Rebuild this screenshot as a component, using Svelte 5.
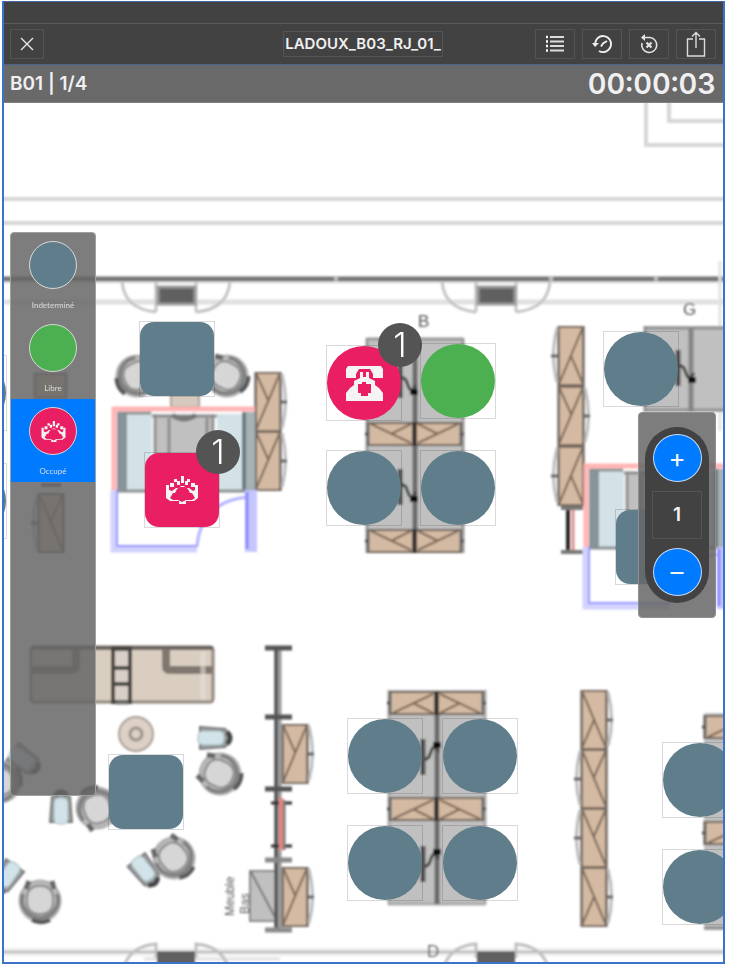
<script>
  const states = [
    { id: 'unknown', label: 'Indeterminé', color: '#607d8b' },
    { id: 'free', label: 'Libre', color: '#4caf50' },
    { id: 'busy', label: 'Occupé', color: '#e91e63', icon: 'meeting' }
  ];
  const colors = Object.fromEntries(states.map((s) => [s.id, s.color]));

  // Top-left corner of each seat on the plan, in plan pixels.
  const seats = [
    { x: -73, y: 252, shape: 'round', state: 'unknown' },
    { x: -73, y: 360, shape: 'round', state: 'unknown' },
    { x: 135, y: 218, shape: 'room', state: 'unknown' },
    { x: 140, y: 349, shape: 'room', state: 'busy', icon: 'meeting', badge: 1, bx: 51, by: -23 },
    { x: 322, y: 242, shape: 'round', state: 'busy', icon: 'phone', badge: 1, bx: 51, by: -23 },
    { x: 416, y: 240, shape: 'round', state: 'free' },
    { x: 322, y: 347, shape: 'round', state: 'unknown' },
    { x: 416, y: 347, shape: 'round', state: 'unknown' },
    { x: 599, y: 228, shape: 'round', state: 'unknown' },
    { x: 611, y: 406, shape: 'room', state: 'unknown' },
    { x: 104, y: 651, shape: 'room', state: 'unknown' },
    { x: 343, y: 615, shape: 'round', state: 'unknown' },
    { x: 438, y: 615, shape: 'round', state: 'unknown' },
    { x: 343, y: 722, shape: 'round', state: 'unknown' },
    { x: 438, y: 722, shape: 'round', state: 'unknown' },
    { x: 658, y: 639, shape: 'round', state: 'unknown' },
    { x: 658, y: 746, shape: 'round', state: 'unknown' }
  ];

  let selected = $state('busy');
  let count = $state(1);
</script>

{#snippet meeting(color)}
  <svg class="glyph" viewBox="0 0 32 28" aria-hidden="true">
    <path fill="#f4f4f4" d="M0 9h3v5l3 1 4-3h3l2-2h3l2 2h3l4 3 2-1V9h3v13l-4 3h-8v3h-7v-3H4l-4-3z" />
    <path fill="#f4f4f4" d="M15 0h3v7h-3zM8 3h3v3H8zM21 3h3v3h-3zM4 7h4v4H4zM25 7h4v4h-4zM11 5h3v4h-3zM19 5h3v4h-3z" />
    <path fill={color} d="M4 22l3-5h2l2-4 3-2h5l3 2 2 4h2l3 5-3 2h-6l-4 2-4-2H7z" />
  </svg>
{/snippet}

{#snippet phone(color)}
  <svg class="glyph big" viewBox="0 0 37 35" aria-hidden="true">
    <path fill="#f4f4f4" d="M2 0h33l2 3v9H27V8H10v4H0V3z" />
    <path fill={color} d="M13 3h11l3 5v1H10V8z" />
    <path fill="#f4f4f4" d="M14 6h3v5h3V6h3v6l6 3v4l4 3 4 5v8H0v-8l4-5 4-3v-4l6-3z" />
    <path fill={color} d="M12 18h4v-2h4v2h5v9h-3v3h-7v-3h-3z" />
  </svg>
{/snippet}

<!-- Pair of low cupboards, each 44 wide; flip turns the door marks over -->
{#snippet lowPair(x, y, flip)}
  <g transform="translate({x} {flip ? y + 24 : y}) scale(1 {flip ? -1 : 1})">
    <rect x="0" y="0" width="97" height="24" fill="#999" />
    <rect x="4" y="2" width="89" height="20" fill="#d4baa2" />
    <path d="M5 2l40 19M25 12l20-10M92 2L52 21M72 12L52 2" stroke="#7c6858" stroke-width="2" fill="none" />
    <path d="M2 1h93v22H2z" stroke="#6a5e55" stroke-width="2" fill="none" />
    <path d="M-1 12h4M94 12h4" stroke="#555" stroke-width="3" />
    <path d="M48.500 0v24" stroke="#383430" stroke-width="5" />
  </g>
{/snippet}

{#snippet lamp(x, y, flip)}
  <g transform="translate({x} {y}) scale(1 {flip ? -1 : 1})" fill="none">
    <path d="M0-18V18" stroke="#555" stroke-width="5" />
    <path d="M2-3l4 3 3 8 3 3 4-6" stroke="#444" stroke-width="3" />
    <path d="M10 12h8" stroke="#111" stroke-width="6" />
  </g>
{/snippet}

<!-- Tall cupboard segment; side puts the handle left or right -->
{#snippet tall(x, y, side, kind)}
  <g transform="translate({x} {y})" fill="none">
    <rect width="28" height="60" fill="#999" />
    <rect x="3" y="1" width="22" height="58" fill="#d4baa2" />
    {#if kind === 'y'}
      <path d="M2 1l12 27M26 1L2 58" stroke="#7c6858" stroke-width="2" />
    {:else if kind === 'ym'}
      <path d="M26 1L14 28M2 1l24 57" stroke="#7c6858" stroke-width="2" />
    {:else if kind === 'a'}
      <path d="M26 1L2 58M14 30l12 28" stroke="#7c6858" stroke-width="2" />
    {:else}
      <path d="M2 1l24 57M14 30L2 58" stroke="#7c6858" stroke-width="2" />
    {/if}
    <path d="M2 1h24v58H2z" stroke="#77695e" stroke-width="2" />
    {#if side === 'r'}
      <path d="M28 2q7 28 0 54" stroke="#bbb" stroke-width="3" /><path d="M27 30h6" stroke="#666" stroke-width="3" />
    {:else}
      <path d="M0 2q-7 28 0 54" stroke="#bbb" stroke-width="3" /><path d="M1 30h-7" stroke="#666" stroke-width="3" />
    {/if}
  </g>
{/snippet}

{#snippet armchair(x, y, angle)}
  <g transform="translate({x} {y}) rotate({angle})" fill="none">
    <circle r="20" fill="#bcbcbc" stroke="#b0b0b0" stroke-width="3" />
    <path d="M-17-7A18 18 0 1 0 17-7" stroke="#808080" stroke-width="4" />
    <path d="M-8 19A20 20 0 0 0 10 19" stroke="#555" stroke-width="4" />
    <rect x="-13" y="-15" width="26" height="28" rx="11" fill="#d6d6d6" stroke="#888" stroke-width="2" />
    <path d="M-14-12l3-8M14-12l-2-8" stroke="#666" stroke-width="5" />
  </g>
{/snippet}

{#snippet stool(x, y, angle)}
  <g transform="translate({x} {y}) rotate({angle})">
    <path d="M-11 14L-9-11q9-9 18 0l2 25z" fill="#9ba1a3" stroke="#777" stroke-width="2" />
    <path d="M-6-13q6-6 12 0" fill="none" stroke="#444" stroke-width="5" />
    <rect x="-7" y="-10" width="14" height="26" rx="5" fill="#d2e4ea" stroke="#a6b2b6" />
  </g>
{/snippet}

{#snippet door(x, y)}
  <g transform="translate({x} {y})" fill="none" stroke="#c4c4c4" stroke-width="3">
    <path d="M0 0v31M40 0v31M0 31Q-32 28-34 0M40 31Q72 28 74 0" />
    <rect x="2" y="6" width="37" height="17" fill="#606060" stroke="#999" />
  </g>
{/snippet}

{#snippet booth(x, y)}
  <g transform="translate({x} {y})" fill="none">
    <rect x="4" y="6" width="138" height="79" fill="#fff" />
    <rect x="5" y="6" width="10" height="78" fill="#87949a" />
    <rect x="15" y="6" width="25" height="78" fill="#d2e2e7" />
    <rect x="43" y="8" width="57" height="76" fill="#c0c0c0" />
    <path d="M40 10h66M43 8v76M57 12v72M95 12v72M101 8v76" stroke="#8d8d8d" stroke-width="3" />
    <rect x="105" y="8" width="25" height="76" fill="#d2e2e7" />
    <rect x="130" y="6" width="13" height="78" fill="#a5b2b6" />
    <path d="M132 6v78" stroke="#6d787c" stroke-width="4" />
    <path d="M3 85h140M5 7h34" stroke="#8a8f8f" stroke-width="3" />
    <path d="M60 9q12 8 24 0" stroke="#777" stroke-width="5" />
    <path d="M2 84V3h141" stroke="#ffb4b4" stroke-width="5" />
    <path d="M2 84v59h83" stroke="#d2d2ff" stroke-width="7" />
    <path d="M5 84v56h80v-2" stroke="#9696ff" stroke-width="2" />
    <path d="M85 140q4-44 50-49" stroke="#b4b4ff" stroke-width="3" />
    <path d="M139 84v62" stroke="#c6c6ff" stroke-width="12" />
    <path d="M135 86v57" stroke="#8787ff" stroke-width="3" />
  </g>
{/snippet}

<main class="app">
  <header>
    <div class="status"></div>
    <nav>
      <div class="side">
        <button class="tool close" aria-label="Fermer">
          <svg width="14" height="14" viewBox="0 0 14 14"><path d="M1 1l12 12M13 1L1 13" stroke="#e8e8e8" stroke-width="1.400" /></svg>
        </button>
      </div>
      <h1>LADOUX_B03_RJ_01_</h1>
      <div class="side end">
        <button class="tool" aria-label="Liste">
          <svg width="20" height="18" viewBox="0 0 20 18"><path d="M5 2h14M5 6.500h14M5 11h14M5 15.500h14" stroke="#dcdcdc" stroke-width="1.800" /><path d="M1 2h2M1 6.500h2M1 11h2M1 15.500h2" stroke="#fff" stroke-width="2.400" /></svg>
        </button>
        <button class="tool" aria-label="Historique">
          <svg width="20" height="20" viewBox="0 0 20 20" fill="none" stroke="#eee" stroke-width="1.900"><path d="M3 10.500A8 8 0 1 1 7 17" /><path d="M0 9l3 4 4-4z" fill="#eee" stroke="none" /><path d="M9 12.500l2-3 4-2.500" /></svg>
        </button>
        <button class="tool" aria-label="Réinitialiser">
          <svg width="20" height="20" viewBox="0 0 20 20" fill="none" stroke="#e4e4e4" stroke-width="1.600"><path d="M5 3.500h6A7.500 7.500 0 1 1 3 9" /><path d="M2 3.500L6 0v7z" fill="#e4e4e4" stroke="none" /><path d="M7.500 8.500l5 5M12.500 8.500l-5 5" stroke-width="2.200" /></svg>
        </button>
        <button class="tool" aria-label="Partager">
          <svg width="20" height="26" viewBox="0 0 20 26" fill="none" stroke="#ddd" stroke-width="1.400"><path d="M7 8H1.500v17h17V8H13M10 17V1.500M6 5.500l4-4 4 4" /></svg>
        </button>
      </div>
    </nav>
    <div class="info"><span class="place">B01 | 1/4</span><time>00:00:03</time></div>
  </header>

  <section class="plan" aria-label="Plan">
    <svg class="drawing" width="720" height="859" viewBox="4 103 720 859" role="img" aria-label="Plan de l’étage">
      <defs><filter id="soft"><feGaussianBlur stdDeviation="1" /></filter></defs>
      <g filter="url(#soft)" fill="none">
        <path d="M646 98v47h84M669 98v23h61M0 199h730M0 223h730" stroke="#d6d6d6" stroke-width="4" />
        <path d="M0 302h730" stroke="#e0e0e0" stroke-width="5" />
        <path d="M0 282h730" stroke="#eee" stroke-width="4" />
        <path d="M0 279h730" stroke="#757575" stroke-width="5" />
        <path d="M336 276v6M551 276v6M656 276v6" stroke="#bbb" stroke-width="4" />
        <path d="M720 261v170" stroke="#e2e2e2" stroke-width="3" />
        {@render door(156, 281)}
        {@render door(476, 281)}
        <path d="M0 952h730" stroke="#eee" stroke-width="8" />
        <path d="M0 952h730" stroke="#b0b0b0" stroke-width="2" />
        <path d="M144 959h136" stroke="#e2e2e2" stroke-width="3" />
        {#each [156, 476] as dx}
          <path d="M{dx} 958v-14q-24 2-31 20M{dx + 40} 958v-14q24 2 31 20" stroke="#bfbfbf" stroke-width="3" />
          <rect x={dx + 1} y="951" width="38" height="14" fill="#606060" />
        {/each}

        <!-- Upper desk island -->
        <rect x="366" y="338" width="98" height="215" fill="#c0c0c0" />
        <path d="M367 339h96M367 338v215M463 338v215" stroke="#999" stroke-width="3" />
        <path d="M415 340v212" stroke="#6a6a6a" stroke-width="5" />
        {@render lowPair(366, 422, false)}
        {@render lowPair(366, 529, false)}
        {@render lamp(400, 380, false)}
        {@render lamp(400, 487, false)}

        <!-- Lower desk island -->
        <rect x="388" y="690" width="98" height="215" fill="#c0c0c0" />
        <path d="M388 904h97M389 690v215M485 690v215" stroke="#aaa" stroke-width="3" />
        <path d="M437 692v212" stroke="#6a6a6a" stroke-width="5" />
        {@render lowPair(388, 691, true)}
        {@render lowPair(388, 797, true)}
        {@render lamp(423, 757, true)}
        {@render lamp(423, 864, true)}

        <!-- Islands cut by the right edge -->
        <rect x="644" y="326" width="90" height="86" fill="#c0c0c0" />
        <path d="M644 328h90M645 326v86M644 410h90" stroke="#929292" stroke-width="3" />
        <path d="M691 328v84" stroke="#858585" stroke-width="5" />
        {@render lamp(678, 368, false)}
        <rect x="704" y="713" width="90" height="217" fill="#c0c0c0" />
        <path d="M704 928h90" stroke="#999" stroke-width="4" />
        {@render lowPair(703, 715, true)}
        {@render lowPair(703, 821, true)}

        <!-- Tall cupboards -->
        {@render tall(254, 372, 'r', 'y')}
        {@render tall(254, 431, 'r', 'y')}
        {@render tall(557, 326, 'l', 'a')}
        {@render tall(557, 386, 'r', 'y')}
        {@render tall(557, 446, 'l', 'a')}
        {@render tall(580, 690, 'r', 'am')}
        {@render tall(580, 749, 'l', 'ym')}
        {@render tall(580, 808, 'l', 'ym')}
        {@render tall(580, 867, 'r', 'am')}
        {@render tall(37, 493, 'l', 'ym')}
        <rect x="35" y="374" width="31" height="24" fill="#d4baa2" stroke="#888" stroke-width="3" />
        <path d="M568 506v48" stroke="#222" stroke-width="4" />
        <path d="M573 506v48" stroke="#d98c8c" stroke-width="3" />
        <path d="M561 552h22M561 508h22" stroke="#777" stroke-width="4" />
        <path d="M41 485h20" stroke="#444" stroke-width="3" />

        <!-- Meeting booths -->
        {@render armchair(137, 376, 62)}
        {@render armchair(227, 376, -62)}
        <rect x="171" y="392" width="28" height="15" fill="#d6cabf" stroke="#aaa096" stroke-width="2" />
        {@render booth(112, 406)}
        {@render booth(584, 463)}

        <!-- Bench -->
        <rect x="31" y="647" width="182" height="55" rx="3" fill="#dacec1" stroke="#8e857c" stroke-width="3" />
        <path d="M32 648h181" stroke="#69625c" stroke-width="4" />
        <path d="M76 649v17q0 4-4 4H32M166 649v17q0 4 4 4h42" stroke="#80776e" stroke-width="8" />
        <path d="M203 652v48" stroke="#e6e2dc" stroke-width="5" stroke-opacity="0.6" />
        <rect x="113" y="648" width="17" height="54" fill="#d8d0c8" stroke="#4a4541" stroke-width="4" />
        <path d="M112 649h19M112 668h19M112 684h19" stroke="#4a4541" stroke-width="4" />
        <path d="M116 703h12" stroke="#777" stroke-width="3" />

        <!-- Lounge -->
        <circle cx="136" cy="734" r="17" fill="#ddd0c4" stroke="#a79f98" stroke-width="2" />
        <circle cx="136" cy="734" r="6" stroke="#9b9188" stroke-width="3" />
        {@render stool(61, 808, 0)}
        {@render stool(214, 738, 90)}
        {@render stool(145, 871, 142)}
        {@render stool(7, 877, 215)}
        {@render stool(24, 760, 125)}
        {@render armchair(97, 808, 160)}
        {@render armchair(220, 774, -65)}
        {@render armchair(174, 858, -38)}
        {@render armchair(40, 901, 0)}
        {@render armchair(0, 782, 260)}

        <!-- Screen rail and its cupboards -->
        <rect x="250" y="871" width="27" height="50" fill="#c0c0c0" stroke="#888" stroke-width="2" />
        <path d="M251 872l25 47" stroke="#777" stroke-width="2" />
        <path d="M278 646v285" stroke="#999" stroke-width="7" />
        <path d="M276 646v285" stroke="#4a4a4a" stroke-width="3" />
        {@render tall(281, 724, 'r', 'y')}
        {@render tall(281, 867, 'r', 'y')}
        <path d="M265 648h27M265 717h27M265 789h27" stroke="#555" stroke-width="5" />
        <path d="M265 860h27M265 930h27" stroke="#8a8a8a" stroke-width="5" />
        <path d="M271 803h21M271 846h21" stroke="#333" stroke-width="3" />
        <path d="M284 800v50" stroke="#777" stroke-width="3" />
        <path d="M281 798v52" stroke="#e28484" stroke-width="4" />

        <g fill="#555" font-family="Liberation Sans, Arial, sans-serif" font-size="17">
          <text x="418" y="327">B</text>
          <text x="683" y="315">G</text>
          <text x="427" y="957">D</text>
          <g font-size="12">
            <text transform="translate(234 916) rotate(-90)">Meuble</text>
            <text transform="translate(249 914) rotate(-90)">Bas</text>
          </g>
        </g>
      </g>
    </svg>

    {#each seats as seat}
      <button class="seat" style="left:{seat.x}px;top:{seat.y}px" aria-label="Poste">
        <span class="shape {seat.shape}" style="background:{colors[seat.state]}">
          {#if seat.icon === 'meeting'}{@render meeting(colors[seat.state])}{/if}
          {#if seat.icon === 'phone'}{@render phone(colors[seat.state])}{/if}
        </span>
        {#if seat.badge}<span class="badge" style="left:{seat.bx}px;top:{seat.by}px">{seat.badge}</span>{/if}
      </button>
    {/each}

    <aside class="palette">
      {#each states as s}
        <button class="choice" class:active={selected === s.id} aria-pressed={selected === s.id} onclick={() => (selected = s.id)}>
          <span class="dot" style="background:{s.color}">
            {#if s.icon}{@render meeting(s.color)}{/if}
          </span>
          <span class="name">{s.label}</span>
        </button>
      {/each}
    </aside>

    <aside class="counter">
      <div class="pill">
        <button class="step" aria-label="Plus" onclick={() => count++}>+</button>
        <output>{count}</output>
        <button class="step" aria-label="Moins" onclick={() => count--}>–</button>
      </div>
    </aside>
  </section>
</main>

<style>
  :global(body) { background: #fff; }
  * { box-sizing: border-box; }
  button { font: inherit; color: inherit; padding: 0; border: 0; background: none; cursor: pointer; }
  .app {
    margin: 1px 5px 0 2px;
    border: 2px solid #3b72cc;
    border-top: 1px solid #4169a6;
    font-family: Inter, "Open Sans", sans-serif;
    background: #fff;
  }
  header { color: #f0f0f2; }
  .status { height: 22px; background: #424242; border-bottom: 1px solid #5c5c5c; }
  nav {
    display: grid;
    grid-template-columns: 1fr auto 1fr;
    align-items: center;
    height: 41px;
    padding: 0 7px 0 6px;
    background: #424242;
    border-bottom: 1px solid #4b638d;
  }
  .side { display: flex; gap: 7px; }
  .end { justify-content: flex-end; }
  .tool {
    display: flex;
    align-items: center;
    justify-content: center;
    width: 40px;
    height: 30px;
    border: 1px solid #545454;
  }
  .close { width: 34px; }
  h1 {
    margin: 0;
    padding: 0 1px;
    border: 1px solid #545454;
    font-size: 15px;
    font-weight: 600;
    line-height: 24px;
  }
  .info {
    display: flex;
    align-items: center;
    justify-content: space-between;
    height: 38px;
    padding: 0 7px 0 6px;
    background: #696969;
    border-bottom: 1px solid #808080;
  }
  .place { font-size: 19px; font-weight: 600; }
  time { font-size: 29px; font-weight: 600; line-height: 36px; font-variant-numeric: tabular-nums; }

  .plan { position: relative; overflow: hidden; }
  .drawing { display: block; }
  .seat {
    position: absolute;
    width: 76px;
    height: 76px;
    border: 1px solid rgba(0, 0, 0, 0.15);
  }
  .shape { display: flex; align-items: center; justify-content: center; width: 74px; height: 74px; }
  .round { border-radius: 50%; }
  .room { border-radius: 14px; }
  .glyph { width: 32px; height: 28px; }
  .glyph.big { width: 37px; height: 35px; }
  .badge {
    position: absolute;
    width: 44px;
    height: 44px;
    border-radius: 50%;
    background: #545454;
    color: #fff;
    font-size: 34px;
    font-weight: 300;
    line-height: 44px;
    text-align: center;
  }

  .palette {
    position: absolute;
    left: 6px;
    top: 129px;
    width: 86px;
    height: 564px;
    border: 1px solid #a0a0a0;
    border-radius: 4px;
    background: rgba(102, 102, 102, 0.85);
  }
  .choice {
    display: flex;
    flex-direction: column;
    align-items: center;
    gap: 8px;
    width: 100%;
    height: 83px;
    padding-top: 8px;
    color: #dcdcdc;
  }
  .active { background: #007aff; }
  .dot {
    display: flex;
    align-items: center;
    justify-content: center;
    width: 48px;
    height: 48px;
    border: 1px solid #d8d8d8;
    border-radius: 50%;
  }
  .dot .glyph { width: 25px; height: 21px; }
  .name { font-family: Lato, sans-serif; font-size: 8px; line-height: 16px; }

  .counter {
    position: absolute;
    right: 7px;
    top: 309px;
    padding: 14px 6px;
    border: 1px solid #909090;
    border-radius: 4px;
    background: rgba(102, 102, 102, 0.85);
  }
  .pill {
    display: flex;
    flex-direction: column;
    align-items: center;
    gap: 9px;
    padding: 7px;
    border-radius: 32px;
    background: #424242;
    color: #f4f4f4;
  }
  .step {
    width: 49px;
    height: 48px;
    border: 1px solid #c4dcf8;
    border-radius: 50%;
    background: #007aff;
    font-size: 26px;
    line-height: 46px;
  }
  output {
    width: 50px;
    height: 48px;
    border: 1px solid #545454;
    font-size: 19px;
    font-weight: 600;
    line-height: 46px;
    text-align: center;
  }
</style>
